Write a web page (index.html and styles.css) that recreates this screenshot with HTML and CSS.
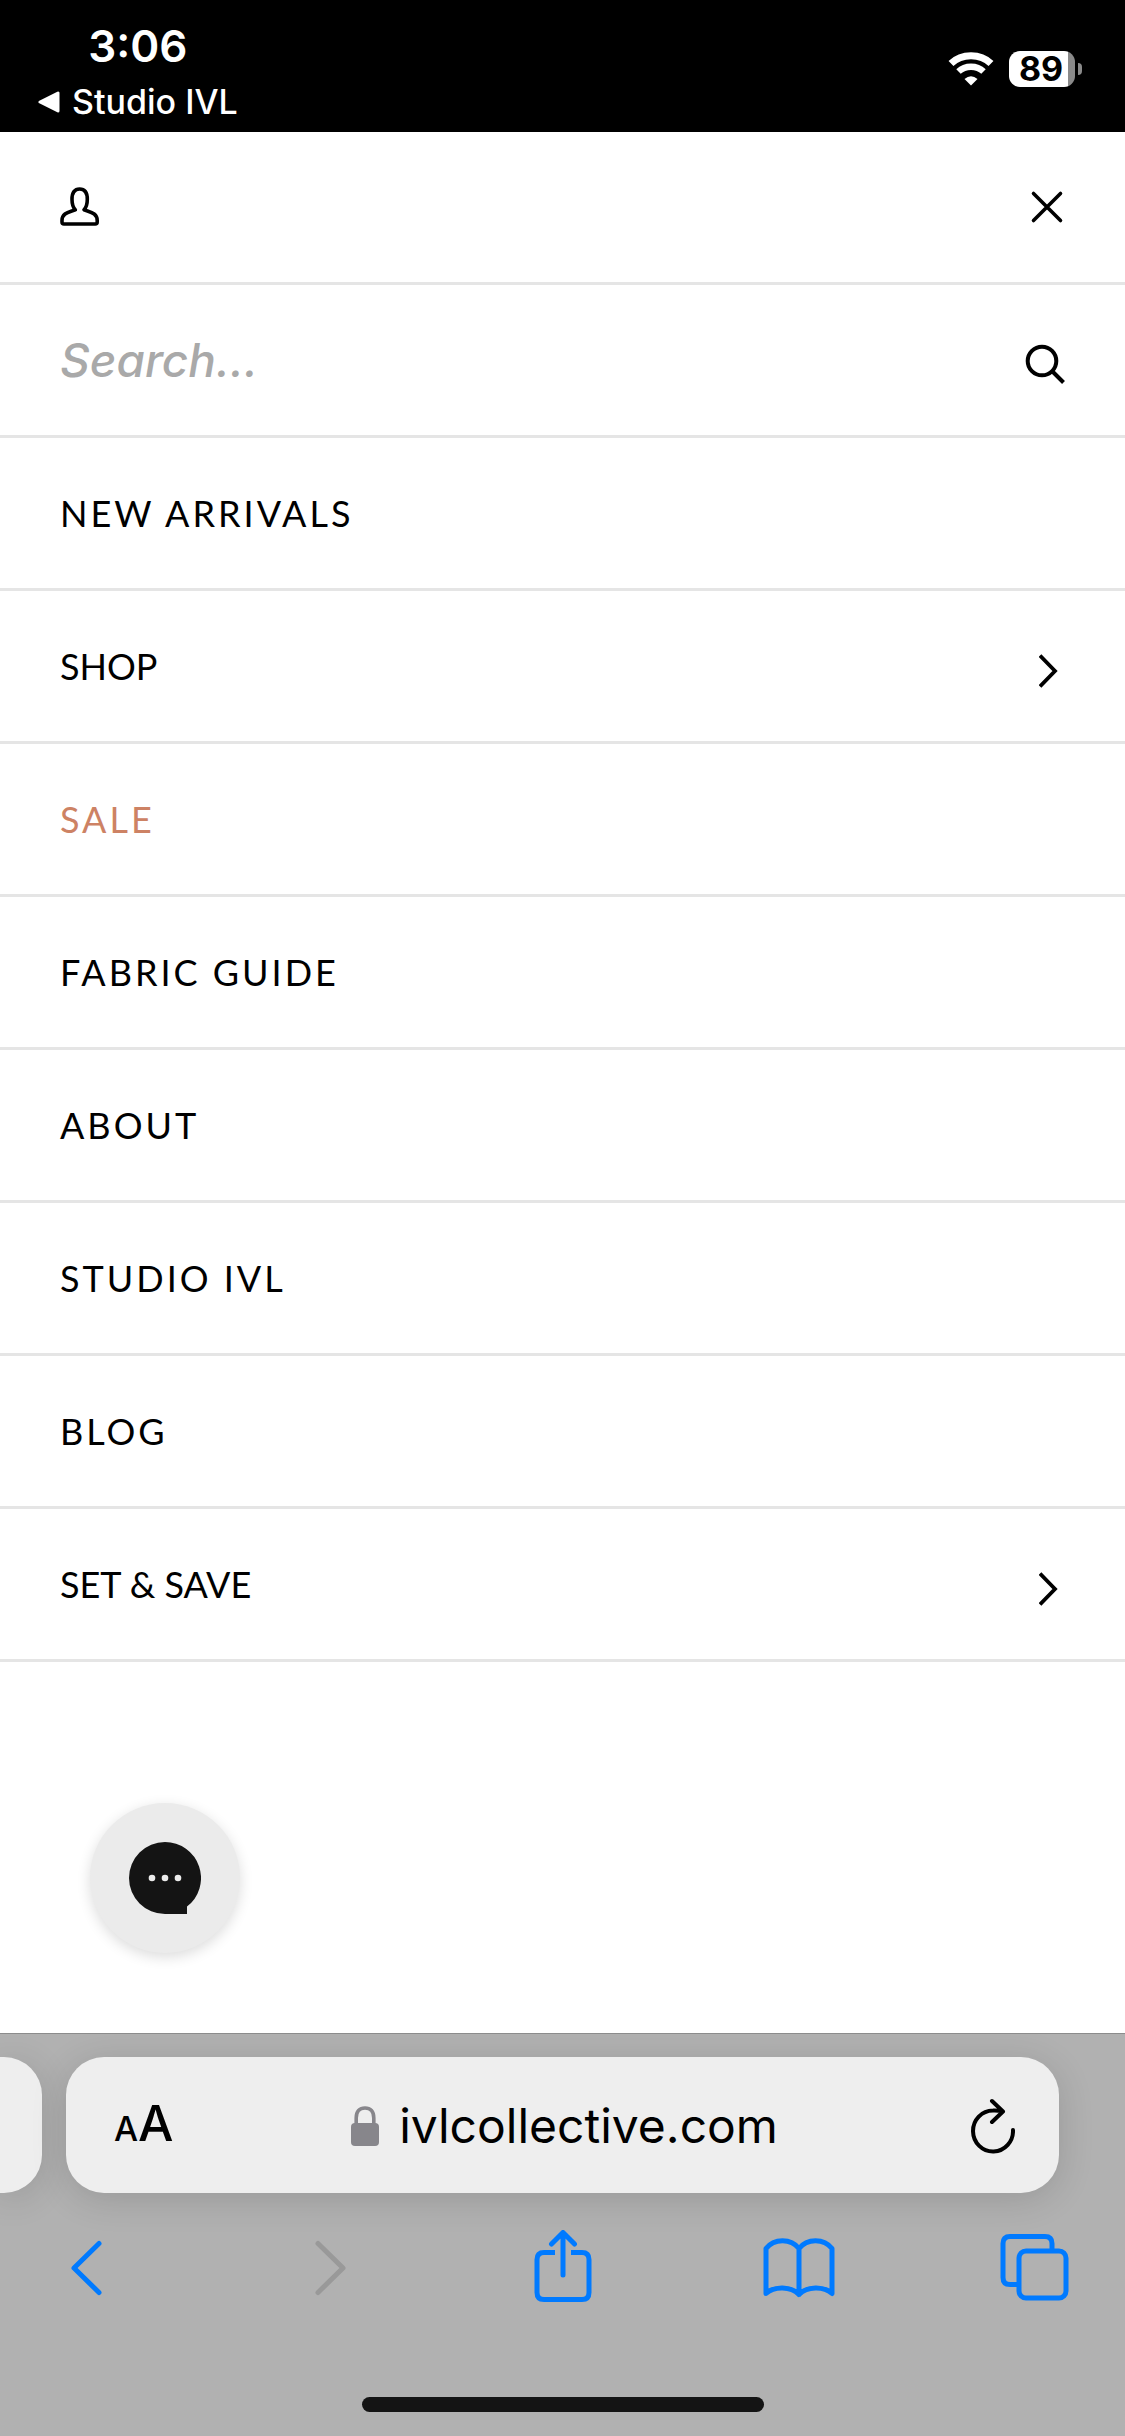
FILE: index.html
```html
<!DOCTYPE html>
<html lang="en">
<head>
<meta charset="utf-8">
<meta name="viewport" content="width=device-width, initial-scale=1">
<title>IVL Collective – Menu</title>
<link rel="stylesheet" href="styles.css">
</head>
<body>
<div class="screen">
  <header class="status">
    <div class="status-left">
      <time class="clock">3:06</time>
      <a class="return" href="#">
        <svg width="22" height="22" viewBox="0 0 22 22" aria-hidden="true"><path d="M20 2v18L2 11z" fill="#fff" stroke="#fff" stroke-width="3" stroke-linejoin="round"/></svg>
        <span>Studio IVL</span>
      </a>
    </div>
    <div class="status-right">
      <svg width="46" height="34" viewBox="0 0 46 34" aria-label="Wi-Fi" role="img">
        <g fill="none" stroke="#fff">
          <path d="M3 11.500Q11 3.700 23 3.700T43 11.500" stroke-width="7"/>
          <path d="M10.500 19.500Q15.500 14.800 23 14.800T35.500 19.500" stroke-width="6.500"/>
        </g>
        <path d="M16.500 27Q23 21.500 29.500 27L23 33.500z" fill="#fff"/>
      </svg>
      <div class="battery"><span class="battery-level">89</span><span class="battery-tip"></span></div>
    </div>
  </header>

  <div class="row">
    <a class="icon-link" href="#" aria-label="Account">
      <svg width="40" height="40" viewBox="0 0 40 40" fill="none" stroke="#000" stroke-width="3.600" stroke-linejoin="round" stroke-linecap="round"><path d="M15.300 22.800C13 20.500 12 16.500 12 12.300C12 5.500 14.500 2 19.600 2S27.300 5.500 27.300 12.300C27.300 16.500 26.300 20.500 24 22.800C30 25.200 37.200 25.800 37.200 33.500V35Q37.200 37 35.200 37H4Q2 37 2 35V33.500C2 25.800 9.300 25.200 15.300 22.800"/></svg>
    </a>
    <button class="icon-button" type="button" aria-label="Close menu">
      <svg width="36" height="36" viewBox="0 0 36 36" stroke="#000" stroke-width="3.600" stroke-linecap="round"><path d="M4.500 4.500l27 27M31.500 4.500l-27 27"/></svg>
    </button>
  </div>

  <form class="row">
    <input class="search" type="text" aria-label="Search" placeholder="Search...">
    <button class="icon-button" type="button" aria-label="Submit search">
      <svg width="40" height="48" viewBox="0 0 40 48" fill="none" stroke="#000" stroke-width="4"><circle cx="17" cy="25" r="14.300"/><path d="M27.500 35.500L38.500 46.500"/></svg>
    </button>
  </form>

  <nav aria-label="Main">
    <a class="row item" href="#">NEW ARRIVALS</a>
    <button class="row item parent" type="button">SHOP
      <svg width="26" height="46" viewBox="0 0 26 46" fill="none" stroke="#000" stroke-width="3.800"><path d="M1 12.500L16 28L1 43.500"/></svg>
    </button>
    <a class="row item sale" href="#">SALE</a>
    <a class="row item" href="#">FABRIC GUIDE</a>
    <a class="row item" href="#">ABOUT</a>
    <a class="row item" href="#">STUDIO IVL</a>
    <a class="row item" href="#">BLOG</a>
    <button class="row item parent" type="button">SET &amp; SAVE
      <svg width="26" height="46" viewBox="0 0 26 46" fill="none" stroke="#000" stroke-width="3.800"><path d="M1 12.500L16 28L1 43.500"/></svg>
    </button>
  </nav>

  <div class="chat-area">
    <button class="chat" type="button" aria-label="Open chat">
      <svg width="72" height="72" viewBox="0 0 72 72"><path d="M36 0A36 36 0 0 1 58 64.500V72H36A36 36 0 0 1 36 0z" fill="#141414"/><g fill="#ebebeb"><circle cx="23" cy="36" r="3.300"/><circle cx="36" cy="36" r="3.300"/><circle cx="49" cy="36" r="3.300"/></g></svg>
    </button>
  </div>

  <footer class="browser">
    <div class="tabs">
      <div class="previous-tab"></div>
      <div class="address">
        <button class="text-size" type="button" aria-label="Page settings"><span class="small-a">A</span><span class="large-a">A</span></button>
        <button class="url" type="button">
          <svg width="28" height="40" viewBox="0 0 28 40" aria-hidden="true"><rect y="17" width="28" height="23" rx="4" fill="#87868b"/><path d="M5.200 19V12C5.200 5.500 8.500 2 14 2S22.800 5.500 22.800 12V19" fill="none" stroke="#87868b" stroke-width="3.600"/></svg>
          <span>ivlcollective.com</span>
        </button>
        <button class="reload" type="button" aria-label="Reload">
          <svg width="44" height="56" viewBox="0 0 44 56" fill="none" stroke="#000" stroke-width="4" stroke-linecap="round" stroke-linejoin="round"><path d="M42 32A20 20.500 0 1 1 22 12.500Q27 12.300 31 13.300M21 3L32 13.500L21 24"/></svg>
        </button>
      </div>
    </div>
    <div class="tools">
      <button class="tool" type="button" aria-label="Back"><svg width="72" height="76" viewBox="0 0 72 76"><path d="M45 13.500L20 38L45 62.500"/></svg></button>
      <button class="tool" type="button" aria-label="Forward" disabled><svg width="72" height="76" viewBox="0 0 72 76"><path d="M28 13.500L53 38L28 62.500"/></svg></button>
      <button class="tool" type="button" aria-label="Share"><svg width="72" height="76" viewBox="0 0 72 76"><path d="M36 45V3M24.500 14L36 2.500L47.500 14"/><path stroke-linecap="butt" d="M28 22.500H17Q10 22.500 10 29.500V62.500Q10 69.500 17 69.500H55Q62 69.500 62 62.500V29.500Q62 22.500 55 22.500H44"/></svg></button>
      <button class="tool" type="button" aria-label="Bookmarks"><svg width="72" height="76" viewBox="0 0 72 76"><path d="M36 18.500C28 8 11 8 3 18.500V63.500C11 56 28 56 36 64.500C44 56 61 56 69 63.500V18.500C61 8 44 8 36 18.500V64.500"/></svg></button>
      <button class="tool" type="button" aria-label="Tabs"><svg width="72" height="76" viewBox="0 0 72 76"><rect x="20" y="21" width="47" height="47" rx="7"/><path stroke-linecap="butt" d="M53 21V13.500Q53 6.500 46 6.500H11Q4 6.500 4 13.500V47.500Q4 54.500 11 54.500H20"/></svg></button>
    </div>
    <div class="home-indicator"></div>
  </footer>
</div>
</body>
</html>
```

FILE: styles.css
```css
* {
  box-sizing: border-box;
}

body {
  margin: 0;
  background: #fff;
  color: #000;
  font-family: Inter, "Liberation Sans", sans-serif;
}

svg {
  display: block;
  flex: none;
}

a {
  color: inherit;
  text-decoration: none;
}

button,
input {
  margin: 0;
  padding: 0;
  border: 0;
  background: none;
  color: inherit;
  font: inherit;
}

.screen {
  display: flex;
  flex-direction: column;
  min-height: 100vh;
}

/* Status bar */
.status {
  display: flex;
  justify-content: space-between;
  padding: 20px 43px 10px 38px;
  background: #000;
  color: #fff;
}

.status-left {
  display: flex;
  flex-direction: column;
  align-items: center;
  gap: 10px;
}

.clock {
  font-size: 44px;
  font-weight: 600;
  line-height: 52px;
}

.return {
  display: flex;
  align-items: center;
  gap: 12px;
  font-size: 34px;
  font-weight: 500;
  line-height: 40px;
}

.status-right {
  display: flex;
  align-items: center;
  gap: 15px;
  padding-bottom: 4px;
}

.battery {
  display: flex;
  align-items: center;
  gap: 3px;
}

.battery-level {
  width: 66px;
  padding-right: 2px;
  border-radius: 11px;
  background: linear-gradient(to right, #fff 89%, #8a8a8a 89%);
  color: #000;
  font-size: 34px;
  font-weight: 700;
  line-height: 36px;
  text-align: center;
}

.battery-tip {
  width: 4px;
  height: 12px;
  border-radius: 0 6px 6px 0;
  background: #8a8a8a;
}

/* Menu drawer */
.row {
  display: flex;
  align-items: center;
  justify-content: space-between;
  width: 100%;
  min-height: 153px;
  padding: 0 60px;
  border-bottom: 3px solid #e5e5e5;
}

.search {
  flex: 1;
  min-width: 0;
  outline: 0;
  font-size: 46px;
  font-style: italic;
  font-weight: 500;
  line-height: 60px;
}

.search::placeholder {
  color: #a9a9a9;
  opacity: 1;
}

.item {
  font-family: Lato, "Open Sans", sans-serif;
  font-size: 36px;
  line-height: 48px;
  letter-spacing: 3px;
}

.parent {
  letter-spacing: 0;
}

.sale {
  color: #cd8264;
}

.chat-area {
  display: flex;
  flex: 1;
  align-items: flex-end;
  padding: 80px 90px;
}

.chat {
  display: grid;
  place-items: center;
  width: 150px;
  height: 150px;
  border-radius: 50%;
  background: #ebebeb;
  box-shadow: 0 4px 14px rgba(0, 0, 0, 0.14);
}

/* Browser controls */
.browser {
  overflow: hidden;
  padding-bottom: 24px;
  border-top: 1px solid #8c8c8c;
  background: #b1b1b1;
}

.tabs {
  display: flex;
  gap: 24px;
  padding: 23px 66px 0 0;
}

.previous-tab,
.address {
  height: 136px;
  background: #eee;
  box-shadow: 0 6px 36px rgba(0, 0, 0, 0.14);
}

.previous-tab {
  width: 42px;
  border-radius: 0 38px 38px 0;
}

.address {
  display: grid;
  flex: 1;
  grid-template-columns: 1fr auto 1fr;
  align-items: center;
  padding: 2px 44px 0 48px;
  border-radius: 38px;
}

.text-size {
  display: flex;
  align-items: baseline;
  justify-self: start;
  font-weight: 500;
  line-height: 60px;
}

.small-a {
  font-size: 34px;
}

.large-a {
  font-size: 50px;
}

.url {
  display: flex;
  align-items: center;
  gap: 20px;
  font-size: 48px;
  line-height: 60px;
}

.reload {
  justify-self: end;
}

.tools {
  display: flex;
  justify-content: space-between;
  padding: 37px 54px 91px;
}

.tool {
  color: #007aff;
}

.tool:disabled {
  color: #999;
}

.tool svg {
  fill: none;
  stroke: currentColor;
  stroke-width: 5;
  stroke-linecap: round;
  stroke-linejoin: round;
}

.home-indicator {
  width: 402px;
  max-width: 60%;
  height: 15px;
  margin: 0 auto;
  border-radius: 8px;
  background: #141414;
}
```
